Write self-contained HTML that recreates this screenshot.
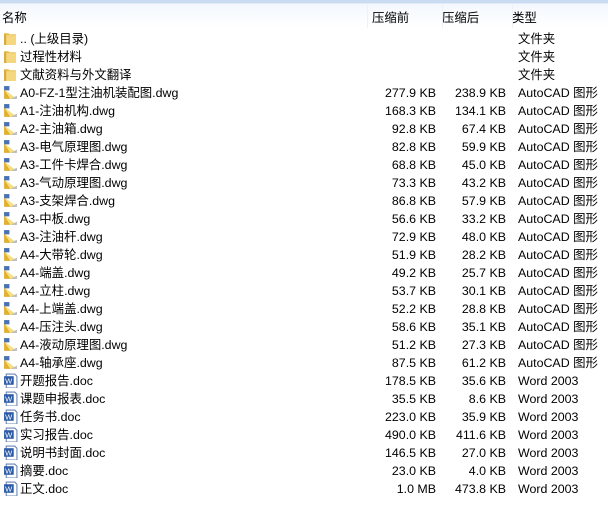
<!DOCTYPE html><html><head><meta charset="utf-8"><style>
body{margin:0;width:608px;height:508px;background:#fff;overflow:hidden;font-family:"Liberation Sans","Noto Sans CJK SC",sans-serif;font-size:12.4px;color:#000;position:relative}
.hd{position:absolute;left:0;top:0;width:608px;height:28px;background:linear-gradient(#c9dcf2 0,#c9dcf2 3px,#f3f8fe 4px,#fff 28px)}
.hd span{position:absolute;top:8px}
.hd i{position:absolute;top:4px;width:1px;height:24px;background:#eef1f5}
.r{position:absolute;left:0;height:18px;line-height:18px;width:608px;white-space:nowrap}
.n{position:absolute;left:20px}
.a{position:absolute;right:172px}
.b{position:absolute;right:102px}
.t{position:absolute;left:518px}
.ic{position:absolute;left:3px;top:1px;width:15px;height:15px}
</style></head><body>
<div class="hd"><span style="left:2px">名称</span><span style="left:372px">压缩前</span><span style="left:442px">压缩后</span><span style="left:512px">类型</span><i style="left:367px"></i><i style="left:442px"></i><i style="left:512px"></i></div>
<div id="rows"></div>
<script>
var F='<svg class="ic" viewBox="0 0 14 14"><path d="M1 2h4l1 1h6v10H1z" fill="#e8c35a"/><path d="M1 4h11v9H1z" fill="#f5d77f"/><path d="M1 3h2v10H1z" fill="#d9a93a"/></svg>';
var D='<svg class="ic" viewBox="0 0 14 14"><path d="M1 13L1 4 7 13z" fill="#e2b030"/><path d="M1 4l6 9h6V13z" fill="#f6df80"/><rect x="1" y="1" width="5" height="4" fill="#4a72b0"/><path d="M7 13h6V10z" fill="#bbb"/></svg>';
var W='<svg class="ic" viewBox="0 0 14 14"><path d="M3 1h8l2 2v11H3z" fill="#fff" stroke="#6a84b8"/><rect x="1" y="3" width="9" height="8" fill="#2c5ba8"/><text x="2" y="10" font-size="7" fill="#fff" font-family="Liberation Sans">W</text></svg>';
var rows=[[F,'.. (上级目录)','','','文件夹'],[F,'过程性材料','','','文件夹'],[F,'文献资料与外文翻译','','','文件夹'],
[D,'A0-FZ-1型注油机装配图.dwg','277.9 KB','238.9 KB'],[D,'A1-注油机构.dwg','168.3 KB','134.1 KB'],[D,'A2-主油箱.dwg','92.8 KB','67.4 KB'],[D,'A3-电气原理图.dwg','82.8 KB','59.9 KB'],[D,'A3-工件卡焊合.dwg','68.8 KB','45.0 KB'],[D,'A3-气动原理图.dwg','73.3 KB','43.2 KB'],[D,'A3-支架焊合.dwg','86.8 KB','57.9 KB'],[D,'A3-中板.dwg','56.6 KB','33.2 KB'],[D,'A3-注油杆.dwg','72.9 KB','48.0 KB'],[D,'A4-大带轮.dwg','51.9 KB','28.2 KB'],[D,'A4-端盖.dwg','49.2 KB','25.7 KB'],[D,'A4-立柱.dwg','53.7 KB','30.1 KB'],[D,'A4-上端盖.dwg','52.2 KB','28.8 KB'],[D,'A4-压注头.dwg','58.6 KB','35.1 KB'],[D,'A4-液动原理图.dwg','51.2 KB','27.3 KB'],[D,'A4-轴承座.dwg','87.5 KB','61.2 KB'],
[W,'开题报告.doc','178.5 KB','35.6 KB'],[W,'课题申报表.doc','35.5 KB','8.6 KB'],[W,'任务书.doc','223.0 KB','35.9 KB'],[W,'实习报告.doc','490.0 KB','411.6 KB'],[W,'说明书封面.doc','146.5 KB','27.0 KB'],[W,'摘要.doc','23.0 KB','4.0 KB'],[W,'正文.doc','1.0 MB','473.8 KB']];
var h='';rows.forEach(function(r,i){var t=r[4]||(r[0]==D?'AutoCAD 图形':'Word 2003');
h+='<div class="r" style="top:'+(30+i*18)+'px">'+r[0]+'<span class="n">'+r[1]+'</span><span class="a">'+r[2]+'</span><span class="b">'+r[3]+'</span><span class="t">'+t+'</span></div>';});
document.getElementById('rows').innerHTML=h;
</script>
</body></html>
